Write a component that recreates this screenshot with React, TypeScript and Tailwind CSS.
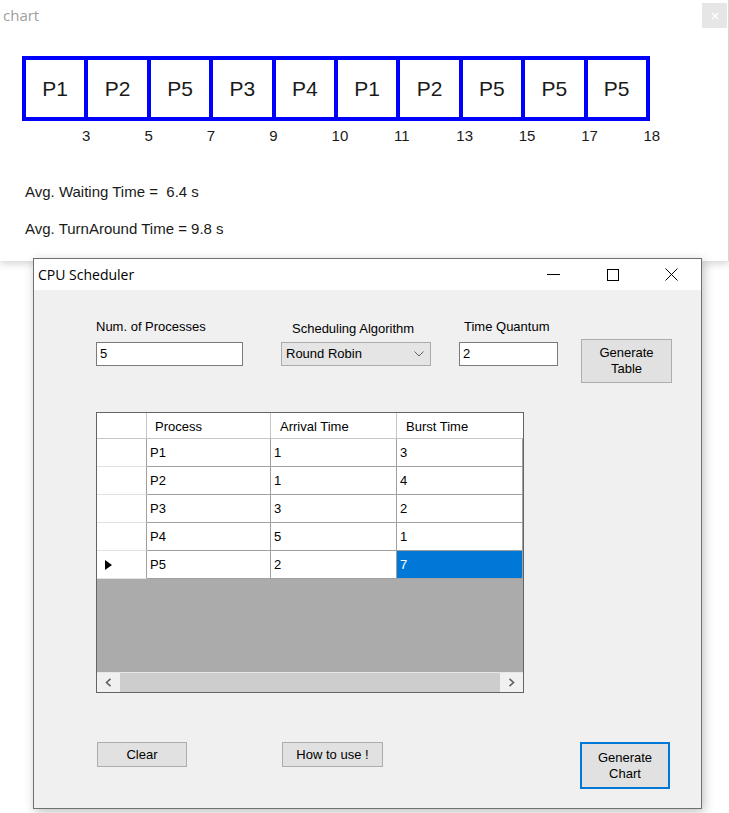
const slots = ["P1", "P2", "P5", "P3", "P4", "P1", "P2", "P5", "P5", "P5"];
const ticks = ["3", "5", "7", "9", "10", "11", "13", "15", "17", "18"];

const rows = [
  { p: "P1", a: "1", b: "3" },
  { p: "P2", a: "1", b: "4" },
  { p: "P3", a: "3", b: "2" },
  { p: "P4", a: "5", b: "1" },
  { p: "P5", a: "2", b: "7" },
];

function ChartWindow() {
  return (
    <div className="absolute left-0 top-0 w-[729px] h-[261px] bg-white border-r border-[#d6d6d6] shadow-[0_3px_7px_rgba(0,0,0,0.16)] font-['Liberation_Sans',Arial,sans-serif]">
      {/* title strip */}
      <div className="relative h-[32px]">
        <span className="absolute left-[3px] top-[5px] text-[15px] leading-[20px] text-[#a0a0a0] font-['Open_Sans','Noto_Sans',sans-serif]">
          chart
        </span>
        <div className="absolute right-[1px] top-[3px] w-[25px] h-[25px] bg-[#e6e6e6] flex items-center justify-center">
          <svg width="8" height="8" viewBox="0 0 8 8">
            <path d="M1 1 L7 7 M7 1 L1 7" stroke="#ffffff" strokeWidth="1.2" />
          </svg>
        </div>
      </div>

      {/* gantt */}
      <div className="ml-[22px] mt-[24px] flex h-[65px] w-[628px] border-y-4 border-r-4 border-[#0000ff]">
        {slots.map((s, i) => (
          <div
            key={i}
            className="w-[62.4px] shrink-0 border-l-4 border-[#0000ff] flex items-center justify-center text-[21px] text-[#1a1a1a]"
          >
            {s}
          </div>
        ))}
      </div>
      <div className="flex pl-[82px] mt-[7px] h-[16px]">
        {ticks.map((t) => (
          <div key={t} className="w-[62.4px] shrink-0 text-[15px] leading-[16px] text-[#1a1a1a]">
            {t}
          </div>
        ))}
      </div>

      <div className="pl-[25px] mt-[40px] text-[15px] leading-[16px] text-[#1a1a1a] whitespace-pre">
        {"Avg. Waiting Time =  6.4 s"}
      </div>
      <div className="pl-[25px] mt-[21px] text-[15px] leading-[16px] text-[#1a1a1a] whitespace-pre">
        {"Avg. TurnAround Time = 9.8 s"}
      </div>
    </div>
  );
}

function Btn({ children, className }: { children: React.ReactNode; className: string }) {
  return (
    <div
      className={
        "shrink-0 bg-[#e1e1e1] flex flex-col items-center justify-center text-[13px] leading-[16px] text-black " +
        className
      }
    >
      {children}
    </div>
  );
}

function Grid() {
  return (
    <div className="ml-[62px] mt-[29px] w-[428px] h-[281px] border border-[#646464] bg-[#ababab] flex flex-col text-[13px] text-black">
      {/* header */}
      <div className="flex h-[26px] bg-white shrink-0">
        <div className="w-[50px] border-r border-b border-[#c6c6c6]" />
        <div className="w-[124px] border-r border-b border-[#c6c6c6] pl-[8px] pt-[6px] leading-[16px]">Process</div>
        <div className="w-[126px] border-r border-b border-[#c6c6c6] pl-[9px] pt-[6px] leading-[16px]">Arrival Time</div>
        <div className="w-[126px] border-b border-[#c6c6c6] pl-[9px] pt-[6px] leading-[16px]">Burst Time</div>
      </div>
      {rows.map((r, i) => {
        const last = i === rows.length - 1;
        return (
          <div key={r.p} className="flex h-[28px] shrink-0">
            <div className="w-[50px] bg-white border-r border-b border-r-[#a0a0a0] border-b-[#e2e2e2] flex items-center pl-[8px]">
              {last && (
                <svg width="7" height="10" viewBox="0 0 7 10">
                  <path d="M0 0 L7 5 L0 10 Z" fill="#000" />
                </svg>
              )}
            </div>
            <div className="w-[124px] bg-white border-r border-b border-[#a0a0a0] pl-[3px] flex items-center">{r.p}</div>
            <div className="w-[126px] bg-white border-r border-b border-[#a0a0a0] pl-[3px] flex items-center">{r.a}</div>
            <div
              className={
                last
                  ? "w-[126px] bg-[#0078d7] text-white border-r border-b border-[#a0a0a0] pl-[3px] flex items-center"
                  : "w-[126px] bg-white border-r border-b border-[#a0a0a0] pl-[3px] flex items-center"
              }
            >
              {r.b}
            </div>
          </div>
        );
      })}
      <div className="flex-1" />
      {/* horizontal scrollbar */}
      <div className="h-[20px] shrink-0 flex bg-[#f0f0f0] border-t border-[#e6e6e6]">
        <div className="w-[23px] flex items-center justify-center">
          <svg width="7" height="9" viewBox="0 0 7 9">
            <path d="M5.5 0.8 L1.5 4.5 L5.5 8.2" stroke="#606060" strokeWidth="1.6" fill="none" />
          </svg>
        </div>
        <div className="flex-1 bg-[#cdcdcd]" />
        <div className="w-[23px] flex items-center justify-center">
          <svg width="7" height="9" viewBox="0 0 7 9">
            <path d="M1.5 0.8 L5.5 4.5 L1.5 8.2" stroke="#606060" strokeWidth="1.6" fill="none" />
          </svg>
        </div>
      </div>
    </div>
  );
}

function SchedulerWindow() {
  return (
    <div className="absolute left-[33px] top-[258px] w-[669px] h-[551px] border border-[#6f6f6f] bg-[#f0f0f0] shadow-[2px_3px_10px_rgba(0,0,0,0.25)] flex flex-col font-['Liberation_Sans',Arial,sans-serif]">
      {/* title bar */}
      <div className="h-[31px] bg-white shrink-0 flex items-center">
        <span className="pl-[4px] text-[14px] text-black font-['Open_Sans','Noto_Sans',sans-serif]">CPU Scheduler</span>
        <div className="ml-auto flex items-center h-full">
          <div className="w-[59px] h-full flex items-center justify-center">
            <svg width="13" height="1" viewBox="0 0 13 1">
              <rect width="13" height="1" fill="#000" />
            </svg>
          </div>
          <div className="w-[59px] h-full flex items-center justify-center">
            <svg width="12" height="12" viewBox="0 0 12 12">
              <rect x="0.5" y="0.5" width="11" height="11" fill="none" stroke="#000" strokeWidth="1" />
            </svg>
          </div>
          <div className="w-[59px] h-full flex items-center justify-center">
            <svg width="13" height="13" viewBox="0 0 13 13">
              <path d="M0.5 0.5 L12.5 12.5 M12.5 0.5 L0.5 12.5" stroke="#000" strokeWidth="1" />
            </svg>
          </div>
        </div>
      </div>

      {/* body */}
      <div className="flex-1 flex flex-col text-[13px] text-black">
        <div className="flex items-start pt-[29px] pl-[62px]">
          <div className="flex flex-col">
            <div className="h-[16px] leading-[16px]">Num. of Processes</div>
            <div className="mt-[7px] w-[147px] h-[24px] bg-white border border-[#7a7a7a] pl-[3px] flex items-center">5</div>
          </div>
          <div className="flex flex-col ml-[38px]">
            <div className="h-[16px] leading-[16px] ml-[11px] mt-[2px]">Scheduling Algorithm</div>
            <div className="mt-[5px] w-[150px] h-[24px] bg-[#e5e5e5] border border-[#acacac] pl-[4px] pr-[6px] flex items-center">
              <span>Round Robin</span>
              <svg className="ml-auto" width="10" height="6" viewBox="0 0 10 6">
                <path d="M0.5 0.5 L5 5 L9.5 0.5" stroke="#606060" strokeWidth="1" fill="none" />
              </svg>
            </div>
          </div>
          <div className="flex flex-col ml-[28px]">
            <div className="h-[16px] leading-[16px] ml-[5px]">Time Quantum</div>
            <div className="mt-[7px] w-[99px] h-[24px] bg-white border border-[#7a7a7a] pl-[3px] flex items-center">2</div>
          </div>
          <Btn className="ml-[23px] mt-[20px] w-[91px] h-[44px] border border-[#adadad]">
            <span>Generate</span>
            <span>Table</span>
          </Btn>
        </div>

        <Grid />

        <div className="flex items-start mt-[49px] pl-[63px]">
          <Btn className="w-[90px] h-[25px] border border-[#adadad]">Clear</Btn>
          <Btn className="ml-[95px] w-[101px] h-[25px] border border-[#adadad]">How to use !</Btn>
          <Btn className="ml-[197px] w-[90px] h-[47px] border-2 border-[#0078d7]">
            <span>Generate</span>
            <span>Chart</span>
          </Btn>
        </div>
      </div>
    </div>
  );
}

export default function App() {
  return (
    <div className="relative w-[729px] h-[813px] bg-white overflow-hidden">
      <ChartWindow />
      <SchedulerWindow />
    </div>
  );
}
